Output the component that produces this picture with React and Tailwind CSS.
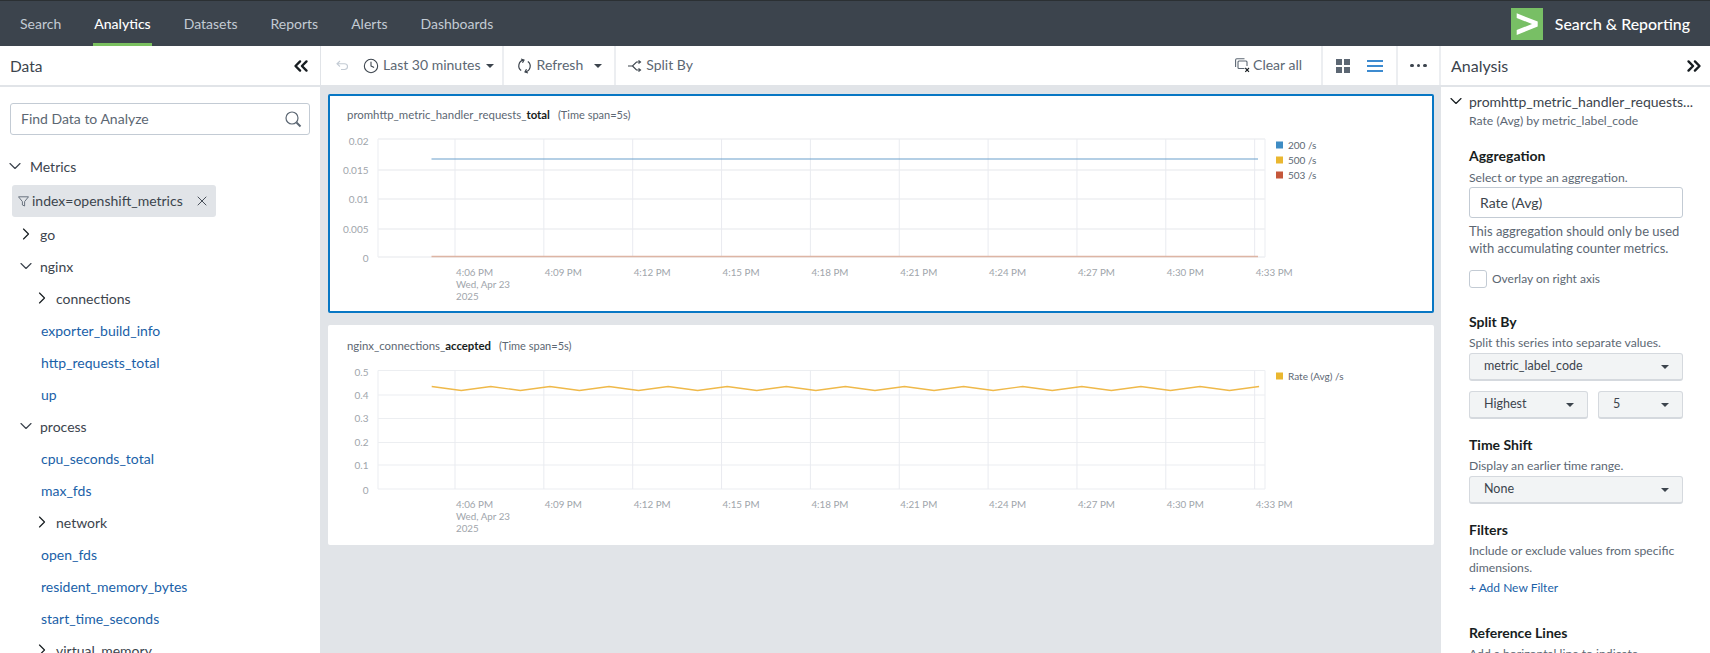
import React from 'react'
import { ChevronDown, ChevronRight, ChevronsLeft, ChevronsRight, Clock, X } from 'lucide-react'

// Top nav
function NavItem ({ label, active }) {
    return (
        <div className={`flex items-center h-full border-b-[3px] px-px pt-[3px] ${active ? 'border-[#7ac05f] text-white font-medium' : 'border-transparent text-[#c3cbd4]'}`}>
            {label}
        </div>
    )
}

function Caret () {
    return <span className="inline-block w-0 h-0 border-x-[4px] border-x-transparent border-t-[4px] border-t-[#3c444d]" />
}

function Sep () {
    return <div className="w-[2px] h-full bg-[#eceef1] shrink-0" />
}

// Tree rows on the left
function TreeFolder ({ label, open, indent }) {
    return (
        <div className={`h-8 flex items-center text-[#3c444d] ${indent ? 'pl-[32px]' : 'pl-[16px]'}`}>
            {open
                ? <ChevronDown size={20} strokeWidth={1.4} className="mr-[4px] text-[#3c444d]" />
                : <ChevronRight size={20} strokeWidth={1.4} className="mr-[4px] text-[#171d21]" />}
            {label}
        </div>
    )
}

function TreeLeaf ({ label }) {
    return <div className="h-8 flex items-center pl-[41px] text-[#1a5fa8]">{label}</div>
}

// Chart card
const ticks = ['4:06 PM', '4:09 PM', '4:12 PM', '4:15 PM', '4:18 PM', '4:21 PM', '4:24 PM', '4:27 PM', '4:30 PM', '4:33 PM']

function Chart ({ yLabels, yPos, children, bottom, legend, thick }) {
    const left = 50
    const right = 937
    const top = yPos[0]
    const gx = ticks.map((_, i) => 127 + i * 88.85)
    return (
        <svg width="1105" height="170" className="block overflow-visible">
            {yPos.map((y) => (
                <line key={y} x1={left} x2={right} y1={y} y2={y} stroke={thick ? '#f2f3f5' : '#eceef1'} strokeWidth={thick ? 2 : 1.2} />
            ))}
            {gx.map((x) => (
                <line key={x} x1={x} x2={x} y1={top} y2={bottom} stroke="#e9ebf0" strokeWidth="1" />
            ))}
            <line x1={left} x2={left} y1={top} y2={bottom} stroke="#eef0f3" strokeWidth="1.2" />
            <line x1={right} x2={right} y1={top} y2={bottom} stroke="#eef0f3" strokeWidth="1.2" />
            {yLabels.map((t, i) => {
                const adj = i === 0 ? 2 : i === yLabels.length - 1 ? 1 : 0
                return <text key={t} x="40.5" y={yPos[i] + 3.5 + adj} textAnchor="end" fontSize="10" fill="#a0a5ab">{t}</text>
            })}
            {ticks.map((t, i) => (
                <text key={t} x={gx[i] + 1} y={bottom + 18.5} fontSize="9.8" fill="#a0a5ab">{t}</text>
            ))}
            <text x={gx[0] + 1} y={bottom + 30.5} fontSize="9.8" fill="#a0a5ab">Wed, Apr 23</text>
            <text x={gx[0] + 1} y={bottom + 42.5} fontSize="9.8" fill="#a0a5ab">2025</text>
            {children}
            {legend.map((l) => (
                <g key={l.label}>
                    <rect x="948" y={l.y} width="7" height="7" fill={l.color} />
                    <text x="960" y={l.y + 7} fontSize="10" fill="#5c6773">{l.label}</text>
                </g>
            ))}
        </svg>
    )
}

function ChartCard ({ name, bold, selected, className, children }) {
    return (
        <div className={`mx-[7px] bg-white rounded-[2px] ${selected ? 'border-2 border-[#0877c4] h-[219px] pt-[10px] pl-[17px]' : 'h-[220px] pt-[12px] pl-[19px]'} ${className}`}>
            <div className="h-[18px] flex items-center text-[11.4px] text-[#5c6773]">
                <span>{name}_<b className="text-[#171d21] font-bold">{bold}</b></span>
                <span className="ml-2 text-[11px]">(Time span=5s)</span>
            </div>
            <div className="-ml-[19px] mt-[14px]">{children}</div>
        </div>
    )
}

// Right panel helpers
function H ({ children, className }) {
    return <div className={`font-bold text-[14px] text-[#171d21] leading-[18px] ${className}`}>{children}</div>
}

function Help ({ children, className }) {
    return <div className={`text-[12.2px] text-[#5c6773] leading-[17px] whitespace-nowrap ${className}`}>{children}</div>
}

function Select ({ label, className }) {
    return (
        <div className={`h-[28px] flex items-center justify-between pl-[14px] pr-[13px] bg-[#f2f4f5] border border-[#d5d9de] border-b-2 rounded-[3px] text-[12.5px] text-[#3c444d] ${className}`}>
            <span>{label}</span>
            <Caret />
        </div>
    )
}

function zig () {
    const pts = []
    for (let i = 0; i <= 28; i++) {
        pts.push(`${103.7 + i * 29.55},${i % 2 === 0 ? 17.5 : 21.5}`)
    }
    return pts.join(' ')
}

export default function App () {
    return (
        <div className="w-[1710px] h-[653px] overflow-hidden flex flex-col bg-white font-['Lato',sans-serif]">

            {/* Top bar */}
            <div className="h-[46px] shrink-0 bg-[#3c444d] border-t border-[#2b3033] flex items-center justify-between text-[14px]">
                <div className="flex h-full ml-[19px] gap-[31px]">
                    <NavItem label="Search" />
                    <NavItem label="Analytics" active />
                    <NavItem label="Datasets" />
                    <NavItem label="Reports" />
                    <NavItem label="Alerts" />
                    <NavItem label="Dashboards" />
                </div>
                <div className="flex items-center mr-[20px]">
                    <svg width="32" height="32" viewBox="0 0 32 32" className="mr-[12px]">
                        <rect width="32" height="32" fill="#78bf65" />
                        <path d="M5.7 5.3 L26.7 13.5 V18.5 L5.7 27 V22 L21 16 L5.7 10 Z" fill="#fff" />
                    </svg>
                    <span className="text-white text-[15.9px] font-medium">Search &amp; Reporting</span>
                </div>
            </div>

            <div className="flex flex-1 min-h-0">

                {/* Left panel */}
                <div className="w-[321px] shrink-0 border-r border-[#e1e4e8] text-[14px]">
                    <div className="h-[41px] border-b-2 border-[#e1e4e8] flex items-center justify-between pl-[10px] pr-[8px]">
                        <span className="text-[15.5px] text-[#3c444d] translate-y-px">Data</span>
                        <ChevronsLeft size={22} strokeWidth={2.6} className="text-[#171d21]" />
                    </div>
                    <div className="mx-[10px] mt-[16px] h-[32px] border border-[#c3cbd4] rounded-[3px] flex items-center justify-between pl-[10px] pr-[7px] text-[14px] text-[#5c6773]">
                        <span className="-mt-[2px]">Find Data to Analyze</span>
                        <svg width="17" height="17" viewBox="0 0 17 17" fill="none" stroke="#5c6773">
                            <circle cx="7" cy="7" r="6" strokeWidth="1.2" />
                            <path d="M11.5 11.5 L15.5 15.5" strokeWidth="2" />
                        </svg>
                    </div>
                    <div className="h-8 mt-[15px] flex items-center pl-[5px] text-[#3c444d]">
                        <ChevronDown size={20} strokeWidth={1.4} className="mr-[5px] text-[#3c444d]" />
                        Metrics
                    </div>
                    <div className="ml-[12px] w-[204px] h-[32px] mt-[3px] mb-[1px] bg-[#e1e4e8] rounded-[3px] flex items-center pl-[6px] pr-[6px] text-[#3c444d]">
                        <svg width="11" height="11" viewBox="0 0 11 11" fill="none" stroke="#5c6773" strokeWidth="0.9" className="mr-[3px]">
                            <path d="M0.5 0.8 H10.5 L6.6 5.6 V10 L4.4 9 V5.6 Z" />
                        </svg>
                        <span className="flex-1 -mt-[2px]">index=openshift_metrics</span>
                        <X size={16} strokeWidth={1.4} className="text-[#3c444d]" />
                    </div>
                    <TreeFolder label="go" />
                    <TreeFolder label="nginx" open />
                    <TreeFolder label="connections" indent />
                    <TreeLeaf label="exporter_build_info" />
                    <TreeLeaf label="http_requests_total" />
                    <TreeLeaf label="up" />
                    <TreeFolder label="process" open />
                    <TreeLeaf label="cpu_seconds_total" />
                    <TreeLeaf label="max_fds" />
                    <TreeFolder label="network" indent />
                    <TreeLeaf label="open_fds" />
                    <TreeLeaf label="resident_memory_bytes" />
                    <TreeLeaf label="start_time_seconds" />
                    <TreeFolder label="virtual_memory" indent />
                </div>

                {/* Center */}
                <div className="w-[1120px] shrink-0 bg-[#e1e4e8] flex flex-col">
                    <div className="h-[41px] bg-white border-b-2 border-[#e1e4e8] flex items-center text-[14px] text-[#5c6773]">
                        <div className="h-full flex items-center pl-[15px] pr-[8px]">
                            <svg width="12" height="11" viewBox="0 0 12 11" fill="none" stroke="#c3cbd4" strokeWidth="1.1" className="mr-[16px]">
                                <path d="M4 1 L1 3.8 L4 6.5 M1 3.8 H8.5 C10.5 3.8 11.5 5 11.5 6.5 C11.5 8 10.5 9.5 8.5 9.5 H5" />
                            </svg>
                            <Clock size={16} strokeWidth={1.6} className="-ml-px mr-[4px] text-[#3c444d]" />
                            <span className="mr-[5px] -translate-y-px">Last 30 minutes</span>
                            <Caret />
                        </div>
                        <Sep />
                        <div className="h-full flex items-center pl-[13px] pr-[12px]">
                            <svg width="15" height="16" viewBox="0 0 15 16" fill="none" stroke="#3c444d" strokeWidth="1.2" className="mr-[5px]">
                                <path d="M6.5 2.2 A5.8 5.8 0 0 0 4.2 12.6" />
                                <path d="M4 1 L7 2 L5.5 4.8" />
                                <path d="M8.5 13.8 A5.8 5.8 0 0 0 10.8 3.4" />
                                <path d="M11 15 L8 14 L9.5 11.2" />
                            </svg>
                            <span className="mr-[11px] -translate-y-px">Refresh</span>
                            <Caret />
                        </div>
                        <Sep />
                        <div className="h-full flex items-center pl-[12px]">
                            <svg width="14" height="12" viewBox="0 0 14 12" fill="none" stroke="#3c444d" strokeWidth="1.1" className="mr-[4px]">
                                <path d="M0 6 H4.5 L8.5 2 H12 M4.5 6 L8.5 10 H12" />
                                <path d="M10.5 0.5 L12.5 2 L10.5 3.5 M10.5 8.5 L12.5 10 L10.5 11.5" />
                            </svg>
                            <span className="-translate-y-px">Split By</span>
                        </div>
                        <div className="flex-1" />
                        <div className="flex items-center mr-[19px]">
                            <svg width="15" height="15" viewBox="0 0 15 15" fill="none" stroke="#5c6773" strokeWidth="1.1" className="mr-[3px]">
                                <path d="M0.6 9 V2 A1.2 1.2 0 0 1 1.8 0.8 H9.5" />
                                <path d="M9.5 10.5 H4 A1 1 0 0 1 3 9.5 V4 A1 1 0 0 1 4 3 H11 A1 1 0 0 1 12 4 V8" />
                                <path d="M10.3 10 L14 13.8 M14 10 L10.3 13.8" stroke="#171d21" />
                            </svg>
                            <span className="-translate-y-px">Clear all</span>
                        </div>
                        <Sep />
                        <div className="h-full flex items-center pl-[13px] pr-[13px] gap-[17px]">
                            <div className="grid grid-cols-2 gap-[2px] w-[14px]">
                                <div className="h-[6px] bg-[#5c6773]" />
                                <div className="h-[6px] bg-[#5c6773]" />
                                <div className="h-[6px] bg-[#5c6773]" />
                                <div className="h-[6px] bg-[#5c6773]" />
                            </div>
                            <div className="w-[16px] flex flex-col gap-[3px]">
                                <div className="h-[2px] bg-[#3d8bd0]" />
                                <div className="h-[2px] bg-[#3d8bd0]" />
                                <div className="h-[2px] bg-[#3d8bd0]" />
                            </div>
                        </div>
                        <Sep />
                        <div className="h-full flex items-center justify-center gap-[3px] w-[41px]">
                            <div className="w-[3.5px] h-[3.5px] rounded-full bg-[#3c444d]" />
                            <div className="w-[3.5px] h-[3.5px] rounded-full bg-[#3c444d]" />
                            <div className="w-[3.5px] h-[3.5px] rounded-full bg-[#3c444d]" />
                        </div>
                        <Sep />
                    </div>

                    <ChartCard name="promhttp_metric_handler_requests" bold="total" selected className="mt-[7px]">
                        <Chart
                            thick
                            yLabels={['0.02', '0.015', '0.01', '0.005', '0']}
                            yPos={[1, 32, 61, 91, 119]}
                            bottom={119}
                            legend={[
                                { label: '200 /s', color: '#3e8cc4', y: 3.5 },
                                { label: '500 /s', color: '#eab730', y: 18.5 },
                                { label: '503 /s', color: '#c5573a', y: 33.5 },
                            ]}
                        >
                            <line x1="103.5" x2="930" y1="21" y2="21" stroke="#6a9fcb" strokeWidth="1.2" />
                            <line x1="103.5" x2="930" y1="118.5" y2="118.5" stroke="#ddb5a4" strokeWidth="1.4" />
                        </Chart>
                    </ChartCard>

                    <ChartCard name="nginx_connections" bold="accepted" className="mt-[12px]">
                        <Chart
                            yLabels={['0.5', '0.4', '0.3', '0.2', '0.1', '0']}
                            yPos={[1.5, 26, 49.5, 73.5, 96, 120]}
                            bottom={120}
                            legend={[{ label: 'Rate (Avg) /s', color: '#eab730', y: 3.5 }]}
                        >
                            <polyline points={zig()} fill="none" stroke="#efb94a" strokeWidth="1.4" />
                        </Chart>
                    </ChartCard>
                </div>

                {/* Right panel */}
                <div className="flex-1 min-w-0 overflow-hidden">
                    <div className="h-[41px] border-b-2 border-[#e1e4e8] flex items-center justify-between pl-[10px] pr-[5px]">
                        <span className="text-[16px] text-[#3c444d]">Analysis</span>
                        <ChevronsRight size={22} strokeWidth={2.6} className="text-[#171d21]" />
                    </div>
                    <div className="pl-[28px] pr-[27px] relative">
                        <ChevronDown size={20} strokeWidth={1.4} className="absolute left-[5px] top-[4px] text-[#171d21]" />
                        <div className="pt-[4px] h-[24px] text-[14px] text-[#3c444d] whitespace-nowrap">promhttp_metric_handler_requests...</div>
                        <div className="mt-[2px] text-[12.2px] text-[#5c6773] leading-[16px]">Rate (Avg) by metric_label_code</div>
                        <H className="mt-[18px]">Aggregation</H>
                        <Help className="mt-[4px]">Select or type an aggregation.</Help>
                        <div className="mt-[1px] h-[31px] border border-[#c3cbd4] rounded-[3px] flex items-center pl-[10px] text-[14px] text-[#3c444d]">Rate (Avg)</div>
                        <Help className="mt-[5px] text-[13px]">This aggregation should only be used<br />with accumulating counter metrics.</Help>
                        <div className="mt-[13px] flex items-center text-[12px] text-[#5c6773]">
                            <div className="w-[18px] h-[18px] border border-[#c3cbd4] rounded-[3px] mr-[5px]" />
                            Overlay on right axis
                        </div>
                        <H className="mt-[25px]">Split By</H>
                        <Help className="mt-[3px]">Split this series into separate values.</Help>
                        <Select label="metric_label_code" className="mt-[2px]" />
                        <div className="flex gap-[10px] mt-[10px]">
                            <Select label="Highest" className="w-[119px]" />
                            <Select label="5" className="flex-1" />
                        </div>
                        <H className="mt-[17px]">Time Shift</H>
                        <Help className="mt-[3px]">Display an earlier time range.</Help>
                        <Select label="None" className="mt-[2px]" />
                        <H className="mt-[17px]">Filters</H>
                        <Help className="mt-[3px]">Include or exclude values from specific<br />dimensions.</Help>
                        <div className="mt-[3px] text-[12px] text-[#1a5fa8] leading-[17px]">+ Add New Filter</div>
                        <H className="mt-[28px]">Reference Lines</H>
                        <Help className="mt-[3px]">Add a horizontal line to indicate</Help>
                    </div>
                </div>
            </div>
        </div>
    )
}
